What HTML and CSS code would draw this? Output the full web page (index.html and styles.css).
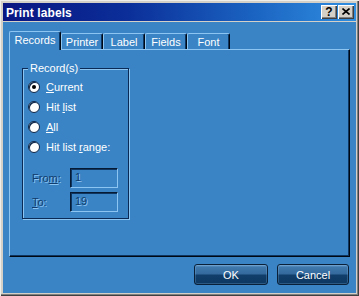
FILE: index.html
```html
<!DOCTYPE html>
<html>
<head>
<meta charset="utf-8">
<link rel="stylesheet" href="styles.css">
</head>
<body>
<div class="window">
  <div class="titlebar">
    <span class="title">Print labels</span>
    <div class="tbtns">
      <span class="tbtn q">?</span>
      <span class="tbtn"><svg width="8" height="7" viewBox="0 0 8 7"><path d="M0.5 0.5 L7.5 6.5 M7.5 0.5 L0.5 6.5" stroke="#000" stroke-width="1.6" fill="none"/></svg></span>
    </div>
  </div>
  <div class="client">
    <div class="tabs">
      <div class="tab sel w52">Records</div>
      <div class="tab w42">Printer</div>
      <div class="tab w42">Label</div>
      <div class="tab w42">Fields</div>
      <div class="tab w43">Font</div>
    </div>
    <div class="panel">
      <fieldset class="group">
        <legend>Record(s)</legend>
        <div class="radio-row"><span class="radio on"></span><span><u>C</u>urrent</span></div>
        <div class="radio-row"><span class="radio"></span><span>Hit <u>l</u>ist</span></div>
        <div class="radio-row"><span class="radio"></span><span><u>A</u>ll</span></div>
        <div class="radio-row"><span class="radio"></span><span>Hit list <u>r</u>ange:</span></div>
        <div class="field-row first"><span class="dis lbl">Fro<u>m</u>:</span><span class="input dis">1</span></div>
        <div class="field-row"><span class="dis lbl"><u>T</u>o:</span><span class="input dis">19</span></div>
      </fieldset>
    </div>
    <div class="buttons">
      <button class="btn ok">OK</button>
      <button class="btn cancel">Cancel</button>
    </div>
  </div>
</div>
</body>
</html>
```
FILE: styles.css
```css
* { box-sizing: border-box; }
html, body { margin: 0; padding: 0; }
body {
  width: 359px;
  height: 296px;
  overflow: hidden;
  font-family: "Liberation Sans", Arial, sans-serif;
  font-size: 11px;
  background: #d4d0c8;
}
.window {
  width: 359px;
  height: 296px;
  padding: 3px;
  background: #d4d0c8;
  box-shadow: inset 1px 1px 0 #f0eee8, inset -1px -1px 0 #404040, inset -2px -2px 0 #808080;
  display: flex;
  flex-direction: column;
}
.titlebar {
  height: 18px;
  flex: none;
  display: flex;
  align-items: center;
  justify-content: space-between;
  padding: 0 2px 0 3px;
  background: linear-gradient(to right, #0a1682 0%, #0b2e98 35%, #1a62c0 70%, #2f8ee0 100%);
}
.title {
  color: #fff;
  font-weight: bold;
  font-size: 12px;
  letter-spacing: 0.1px;
  padding-top: 1px;
}
.tbtns { display: flex; gap: 1px; }
.tbtn {
  width: 16px;
  height: 14px;
  background: #d4d0c8;
  box-shadow: inset 1px 1px 0 #fff, inset -1px -1px 0 #404040, inset -2px -2px 0 #808080;
  display: flex;
  align-items: center;
  justify-content: center;
  color: #000;
  font-weight: bold;
  font-size: 11px;
  line-height: 1;
  padding-bottom: 1px;
}
.tbtn.q { font-size: 12px; }
.client {
  margin-top: 1px;
  flex: 1;
  background: #3a84c5;
  padding: 9px 6px 0 6px;
  color: #fff;
}
.tabs {
  display: flex;
  align-items: flex-end;
  height: 18px;
  position: relative;
  z-index: 1;
}
.tab {
  height: 16px;
  border-top: 1px solid #8cc4f2;
  border-left: 1px solid #8cc4f2;
  border-right: 1px solid #000814;
  box-shadow: inset -1px 0 0 #0e3460;
  border-radius: 2px 2px 0 0;
  background: #3a84c5;
  text-align: center;
  line-height: 14px;
  padding-top: 1px;
  margin-bottom: 0;
}
.tab.sel {
  height: 19px;
  margin-bottom: -1px;
  line-height: 14px;
  padding-top: 1px;
}
.w52 { width: 52px; }
.w42 { width: 42px; }
.w43 { width: 43px; }
.panel {
  width: 341px;
  height: 208px;
  border-top: 1px solid #8cc4f2;
  border-left: 1px solid #8cc4f2;
  border-right: 1px solid #000814;
  border-bottom: 1px solid #000814;
  box-shadow: inset -1px -1px 0 #0e3460;
  padding: 12px 0 0 12px;
}
.group {
  width: 107px;
  margin: 0;
  padding: 2px 0 6px 5px;
  border: 1px solid #0b2a55;
  box-shadow: 1px 1px 0 #8cc4f2, inset 1px 1px 0 #8cc4f2;
}
.group legend {
  padding: 0 2px;
  line-height: 13px;
  background: #3a84c5;
  color: #fff;
}
.radio-row {
  height: 20px;
  display: flex;
  align-items: center;
  gap: 6px;
}
.radio {
  width: 12px;
  height: 12px;
  border-radius: 50%;
  background: #fff;
  border: 1px solid #0a2448;
  box-shadow: inset 1px 1px 0 #0a2448;
  display: flex;
  align-items: center;
  justify-content: center;
}
.radio.on::after {
  content: "";
  width: 4px;
  height: 4px;
  border-radius: 50%;
  background: #000;
}
.field-row {
  display: flex;
  align-items: center;
  height: 20px;
  margin-top: 4px;
}
.field-row.first { margin-top: 11px; }
.lbl {
  width: 38px;
  margin-left: 4px;
}
.dis {
  color: #113c6c;
  text-shadow: 1px 1px 0 #8cc4f2;
}
.input {
  width: 48px;
  height: 20px;
  border: 1px solid;
  border-color: #061a34 #8cc4f2 #8cc4f2 #061a34;
  box-shadow: inset 1px 1px 0 #0e3460;
  padding-left: 4px;
  line-height: 17px;
}
.buttons {
  display: flex;
  justify-content: flex-end;
  gap: 9px;
  margin-top: 7px;
  padding-right: 1px;
}
.btn {
  height: 21px;
  margin: 0;
  border: 1px solid #0a2038;
  border-radius: 3px;
  background: linear-gradient(to bottom, #6a9ccc 0%, #3f78ac 12%, #34699c 48%, #103e6a 52%, #0d3862 100%);
  color: #fff;
  font-family: "Liberation Sans", Arial, sans-serif;
  font-size: 11px;
  padding: 0;
  box-shadow: inset 0 0 0 1px rgba(140,190,230,0.25);
}
.ok { width: 74px; }
.cancel { width: 72px; }
```
